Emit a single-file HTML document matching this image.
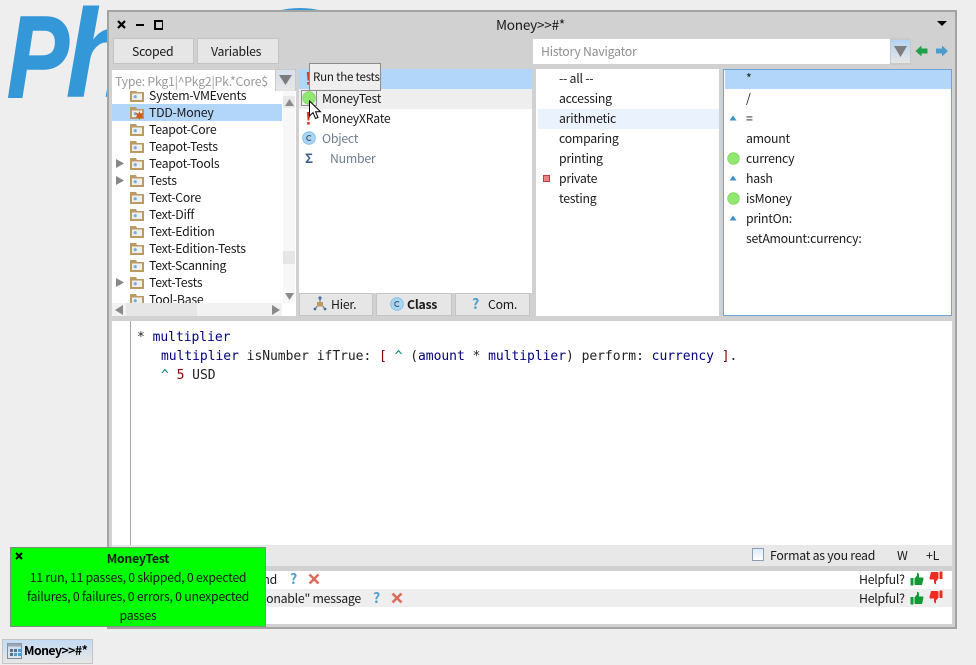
<!DOCTYPE html>
<html><head><meta charset="utf-8"><style>
html,body{margin:0;padding:0}
body{width:976px;height:665px;overflow:hidden;background:#eee;position:relative;font-family:"Noto Sans CJK JP","Liberation Sans",sans-serif;font-size:12.3px;letter-spacing:-.25px;color:#1a1a1a}
div,span.a,svg.a{position:absolute}
.t{white-space:nowrap;height:20px;line-height:18px}
.btn{background:#e6e6e6;border:1px solid #c4c4c4;box-sizing:border-box}
.mono{font-family:"DejaVu Sans Mono","Liberation Mono",monospace;font-size:13px;letter-spacing:-.04px;white-space:pre;line-height:19px;height:19px;color:#222}
.n{color:#000080}.r{color:#8b0000}.c{color:#008080}
.q{color:#4b9bcb;font-weight:bold;font-size:14px;letter-spacing:0}
</style></head><body>
<svg width="0" height="0" style="position:absolute"><defs>
<symbol id="f" viewBox="0 0 14 12"><path d="M0 0H6L7 2H14V12H0Z" fill="#bd9a62"/><rect x="2" y="3.5" width="10" height="6.5" fill="#eef0ee"/><circle cx="5.2" cy="6.7" r="1.6" fill="#6fb0dc"/></symbol>
<symbol id="g" viewBox="0 0 14 14"><circle cx="7" cy="7" r="6.2" fill="#90e870" stroke="#84d668" stroke-width="1"/></symbol>
<symbol id="tr" viewBox="0 0 8 6"><path d="M4 0.5L7.5 5.5H0.5Z" fill="#3f92c4"/></symbol>
<symbol id="up" viewBox="0 0 14 14"><path d="M0.5 6H3.5V13.5H0.5ZM4.5 6.5L7 3.5V0.7Q9 0.7 9 3V5.5H13.2Q13.8 7 13 9L12 13H6Q4.5 13 4.5 12Z" fill="#119a35"/></symbol>
<symbol id="dn" viewBox="0 0 14 14"><path d="M10.5 8H13.5V0.5H10.5ZM9.5 7.5L7 10.5V13.3Q5 13.3 5 11V8.5H0.8Q0.2 7 1 5L2 1H8Q9.5 1 9.5 2Z" fill="#ea2f20"/></symbol>
<symbol id="x" viewBox="0 0 12 12"><path d="M1.5 1.5L10.5 10.5M10.5 1.5L1.5 10.5" stroke="#dd6b5c" stroke-width="2.6" fill="none"/></symbol>
</defs></svg>

<div class="t" style="left:7px;top:-8px;font:italic bold 116px/130px 'Liberation Sans',sans-serif;letter-spacing:0;height:130px;color:#3498d8;-webkit-text-stroke:1.5px #3498d8;transform:scaleX(.8);transform-origin:left top">P</div>
<div class="t" style="left:66px;top:-11px;font:italic bold 124px/130px 'Liberation Sans',sans-serif;letter-spacing:0;height:130px;color:#3498d8;-webkit-text-stroke:1px #3498d8;transform:scaleX(.9);transform-origin:left top">h</div>
<svg class="a" style="left:240px;top:0" width="120" height="12"><ellipse cx="60" cy="50" rx="60" ry="42" fill="#3498d8"/></svg>

<!-- window -->
<div style="left:107px;top:10px;width:850px;height:619px;box-sizing:border-box;border:2px solid #a3a3a3;background:#d1d1d1"></div>
<svg class="a" style="left:117px;top:20px" width="46" height="10"><path d="M1 1L8 8M8 1L1 8" stroke="#000" stroke-width="2.2"/><rect x="19" y="4" width="8" height="2" fill="#000"/><rect x="38" y="1" width="8" height="8" fill="none" stroke="#000" stroke-width="2"/></svg>
<div class="t" style="left:496px;top:15px;font-size:13.6px">Money&gt;&gt;#*</div>
<svg class="a" style="left:937px;top:21px" width="10" height="6"><path d="M0 0H10L5 5Z" fill="#000"/></svg>

<div class="btn" style="left:113px;top:38px;width:81px;height:26px"></div>
<div class="t" style="left:132px;top:42px">Scoped</div>
<div class="btn" style="left:197px;top:38px;width:82px;height:26px"></div>
<div class="t" style="left:211px;top:42px">Variables</div>

<div style="left:533px;top:39px;width:357px;height:25px;background:#fff"></div>
<div class="t" style="left:541px;top:42px;color:#8f8f8f">History Navigator</div>
<div style="left:890px;top:38px;width:21px;height:27px;background:#c9c9c9"></div>
<div style="left:891px;top:40px;width:19px;height:23px;background:linear-gradient(#b4d4f4,#e6e6e6)"></div>
<svg class="a" style="left:894px;top:46px" width="14" height="12"><path d="M0 0H13L6.5 11Z" fill="#7d7d7d"/></svg>
<svg class="a" style="left:915px;top:44px" width="14" height="14"><path d="M0.5 7L6.5 1.5V4.5H12.5V9.5H6.5V12.5Z" fill="#1fa348"/></svg>
<svg class="a" style="left:935px;top:44px" width="14" height="14"><path d="M13 7L7 1.5V4.5H1V9.5H7V12.5Z" fill="#4b9bcb"/></svg>

<!-- package pane -->
<div style="left:112px;top:70px;width:163px;height:21px;background:#fff"></div>
<div class="t" style="left:115px;top:72px;color:#9a9a9a">Type: Pkg1|^Pkg2|Pk.*Core$</div>
<div style="left:275px;top:69px;width:21px;height:22px;background:#c9c9c9"></div>
<div style="left:276px;top:70px;width:19px;height:21px;background:linear-gradient(#d6e2ee,#e6e6e6)"></div>
<svg class="a" style="left:279px;top:75px" width="13" height="11"><path d="M0 0H13L6.5 10Z" fill="#7d7d7d"/></svg>
<div style="left:112px;top:91px;width:184px;height:225px;background:#fff;overflow:hidden">
 <div style="left:0;top:13px;width:170px;height:17px;background:#b2d5fa"></div>
 <div class="t" style="left:37px;top:-5px">System-VMEvents</div>
 <div class="t" style="left:37px;top:12px">TDD-Money</div>
 <div class="t" style="left:37px;top:29px">Teapot-Core</div>
 <div class="t" style="left:37px;top:46px">Teapot-Tests</div>
 <div class="t" style="left:37px;top:63px">Teapot-Tools</div>
 <div class="t" style="left:37px;top:80px">Tests</div>
 <div class="t" style="left:37px;top:97px">Text-Core</div>
 <div class="t" style="left:37px;top:114px">Text-Diff</div>
 <div class="t" style="left:37px;top:131px">Text-Edition</div>
 <div class="t" style="left:37px;top:148px">Text-Edition-Tests</div>
 <div class="t" style="left:37px;top:165px">Text-Scanning</div>
 <div class="t" style="left:37px;top:182px">Text-Tests</div>
 <div class="t" style="left:37px;top:199px">Tool-Base</div>
 <svg class="a" style="left:18px;top:0" width="14" height="225">
  <use href="#f" x="0" y="-1" width="14" height="12"/>
  <use href="#f" x="0" y="16" width="14" height="12"/>
  <use href="#f" x="0" y="33" width="14" height="12"/>
  <use href="#f" x="0" y="50" width="14" height="12"/>
  <use href="#f" x="0" y="67" width="14" height="12"/>
  <use href="#f" x="0" y="84" width="14" height="12"/>
  <use href="#f" x="0" y="101" width="14" height="12"/>
  <use href="#f" x="0" y="118" width="14" height="12"/>
  <use href="#f" x="0" y="135" width="14" height="12"/>
  <use href="#f" x="0" y="152" width="14" height="12"/>
  <use href="#f" x="0" y="169" width="14" height="12"/>
  <use href="#f" x="0" y="186" width="14" height="12"/>
  <use href="#f" x="0" y="203" width="14" height="12"/>
 </svg>
 <svg class="a" style="left:23px;top:20px" width="9" height="9"><path d="M4.5 0L5.5 2.5L8.5 2L7 4.5L8.5 7L5.5 6.5L4.5 9L3.5 6.5L0.5 7L2 4.5L0.5 2L3.5 2.5Z" fill="#d9541e"/></svg>
 <svg class="a" style="left:4px;top:68px" width="8" height="10"><path d="M0 0L8 4.5L0 9Z" fill="#888"/></svg>
 <svg class="a" style="left:4px;top:85px" width="8" height="10"><path d="M0 0L8 4.5L0 9Z" fill="#888"/></svg>
 <svg class="a" style="left:4px;top:187px" width="8" height="10"><path d="M0 0L8 4.5L0 9Z" fill="#888"/></svg>
 <!-- v scroll -->
 <div style="left:171px;top:0;width:12px;height:212px;background:#f7f7f7"></div>
 <div style="left:171px;top:5px;width:12px;height:12px;background:#e8e8e8"></div>
 <div style="left:171px;top:160px;width:12px;height:13px;background:#e6e6e6"></div>
 <svg class="a" style="left:173px;top:8px" width="9" height="7"><path d="M4.5 0L9 7H0Z" fill="#8a8a8a"/></svg>
 <svg class="a" style="left:173px;top:202px" width="9" height="7"><path d="M4.5 7L9 0H0Z" fill="#8a8a8a"/></svg>
 <!-- h scroll -->
 <div style="left:0;top:212px;width:170px;height:13px;background:#f2f2f2"></div>
 <div style="left:14px;top:212px;width:71px;height:13px;background:#e6e6e6"></div>
 <svg class="a" style="left:3px;top:214px" width="8" height="10"><path d="M0 5L8 0V10Z" fill="#8a8a8a"/></svg>
 <svg class="a" style="left:160px;top:214px" width="8" height="10"><path d="M8 5L0 0V10Z" fill="#8a8a8a"/></svg>
</div>

<!-- class pane -->
<div style="left:299px;top:69px;width:233px;height:224px;background:#fff"></div>
<div style="left:299px;top:69px;width:233px;height:20px;background:#b2d5fa"></div>
<div style="left:299px;top:89px;width:233px;height:20px;background:#eee"></div>
<div class="t" style="left:322px;top:89px">MoneyTest</div>
<div class="t" style="left:322px;top:109px">MoneyXRate</div>
<div class="t" style="left:322px;top:129px;color:#6f7f92">Object</div>
<div class="t" style="left:330px;top:149px;color:#6f7f92">Number</div>
<div style="left:301px;top:90px;width:16px;height:16px;box-sizing:border-box;border:1px solid #8a8a8a"></div>
<svg class="a" style="left:302px;top:91px" width="14" height="14"><use href="#g" width="14" height="14"/></svg>
<svg class="a" style="left:306px;top:72px" width="5" height="14"><path d="M0.8 0H4.2L3.4 8.5H1.6Z" fill="#d83a2e"/><rect x="1.2" y="10" width="2.6" height="2.6" fill="#d83a2e"/></svg>
<svg class="a" style="left:306px;top:112px" width="5" height="14"><path d="M0.8 0H4.2L3.4 8.5H1.6Z" fill="#d83a2e"/><rect x="1.2" y="10" width="2.6" height="2.6" fill="#d83a2e"/></svg>
<svg class="a" style="left:302px;top:131px" width="14" height="14"><circle cx="7" cy="7" r="6.3" fill="#a9d6f5" stroke="#85bfe6"/><path d="M9 5.3A2.5 2.5 0 1 0 9 8.7" fill="none" stroke="#3a4f66" stroke-width="1"/></svg>
<div class="t" style="left:305px;top:149px;color:#3e5f8a;font-weight:bold;font-size:13px">Σ</div>

<div class="btn" style="left:299px;top:293px;width:74px;height:23px"></div>
<div class="t" style="left:331px;top:295px">Hier.</div>
<svg class="a" style="left:313px;top:296px" width="14" height="15"><path d="M7 2V6M5 9L2 13M9 9L12 13" stroke="#4a6d92" stroke-width="1"/><circle cx="7" cy="2" r="1.6" fill="#4a6d92"/><rect x="4" y="6" width="6" height="4.5" fill="#c09a5c"/><circle cx="2" cy="13" r="1.4" fill="#4a6d92"/><circle cx="12" cy="13" r="1.4" fill="#4a6d92"/></svg>
<div class="btn" style="left:376px;top:293px;width:76px;height:23px"></div>
<div class="t" style="left:407px;top:295px;font-weight:bold">Class</div>
<svg class="a" style="left:390px;top:297px" width="14" height="14"><circle cx="7" cy="7" r="6.3" fill="#a9d6f5" stroke="#85bfe6"/><path d="M9 5.3A2.5 2.5 0 1 0 9 8.7" fill="none" stroke="#3a4f66" stroke-width="1"/></svg>
<div class="btn" style="left:455px;top:293px;width:75px;height:23px"></div>
<div class="t" style="left:488px;top:295px">Com.</div>
<div class="t q" style="left:472px;top:295px">?</div>

<!-- tooltip -->
<div style="left:309px;top:63px;width:72px;height:28px;box-sizing:border-box;border:1px solid #8a8a8a;background:#eee"></div>
<div class="t" style="left:313px;top:68px;font-size:11.6px">Run the tests</div>

<!-- protocol pane -->
<div style="left:536px;top:69px;width:183px;height:247px;background:#fff"></div>
<div style="left:538px;top:109px;width:181px;height:20px;background:#eaf3fd"></div>
<div class="t" style="left:559px;top:69px">-- all --</div>
<div class="t" style="left:559px;top:89px">accessing</div>
<div class="t" style="left:559px;top:109px">arithmetic</div>
<div class="t" style="left:559px;top:129px">comparing</div>
<div class="t" style="left:559px;top:149px">printing</div>
<div class="t" style="left:559px;top:169px">private</div>
<div class="t" style="left:559px;top:189px">testing</div>
<div style="left:543px;top:175px;width:7px;height:7px;box-sizing:border-box;border:1px solid #c43a42;background:#ee8088"></div>

<!-- method pane -->
<div style="left:723px;top:69px;width:229px;height:247px;box-sizing:border-box;border:1px solid #6fa3d6;background:#fff"></div>
<div style="left:725px;top:70px;width:226px;height:19px;background:#b2d5fa"></div>
<div class="t" style="left:746px;top:69px">*</div>
<div class="t" style="left:746px;top:89px">/</div>
<div class="t" style="left:746px;top:109px">=</div>
<div class="t" style="left:746px;top:129px">amount</div>
<div class="t" style="left:746px;top:149px">currency</div>
<div class="t" style="left:746px;top:169px">hash</div>
<div class="t" style="left:746px;top:189px">isMoney</div>
<div class="t" style="left:746px;top:209px">printOn:</div>
<div class="t" style="left:746px;top:229px">setAmount:currency:</div>
<svg class="a" style="left:729px;top:115px" width="8" height="6"><use href="#tr" width="8" height="6"/></svg>
<svg class="a" style="left:729px;top:175px" width="8" height="6"><use href="#tr" width="8" height="6"/></svg>
<svg class="a" style="left:729px;top:215px" width="8" height="6"><use href="#tr" width="8" height="6"/></svg>
<svg class="a" style="left:727px;top:152px" width="13" height="13"><use href="#g" width="13" height="13"/></svg>
<svg class="a" style="left:727px;top:192px" width="13" height="13"><use href="#g" width="13" height="13"/></svg>

<!-- code -->
<div style="left:112px;top:321px;width:840px;height:224px;background:#fff"></div>
<div style="left:130px;top:321px;width:1px;height:224px;background:#a8a8a8"></div>
<div class="mono" style="left:137px;top:328px">* <span class="n">multiplier</span></div>
<div class="mono" style="left:161px;top:347px"><span class="n">multiplier</span> isNumber ifTrue: <span class="r">[</span> <span class="c">^</span> (<span class="n">amount</span> * <span class="n">multiplier</span>) perform: <span class="n">currency</span> <span class="r">]</span>.</div>
<div class="mono" style="left:161px;top:366px"><span class="c">^</span> <span class="r">5</span> USD</div>

<!-- status -->
<div style="left:112px;top:545px;width:840px;height:21px;background:#e8e8e8"></div>
<div style="left:752px;top:548px;width:12px;height:13px;box-sizing:border-box;border:1px solid #8e9cb4;background:linear-gradient(#dcebfa,#fff)"></div>
<div class="t" style="left:770px;top:546px">Format as you read</div>
<div class="t" style="left:897px;top:546px">W</div>
<div class="t" style="left:926px;top:546px">+L</div>

<!-- critics -->
<div style="left:112px;top:571px;width:840px;height:53px;background:#fff"></div>
<div style="left:112px;top:589px;width:840px;height:18px;background:#eee"></div>
<div class="t" style="right:699px;top:570px">Unbound</div>
<div class="t" style="right:615px;top:589px">Sends "questionable" message</div>
<div class="t q" style="left:290px;top:570px">?</div>
<div class="t q" style="left:373px;top:589px">?</div>
<svg class="a" style="left:308px;top:573px" width="12" height="12"><use href="#x" width="12" height="12"/></svg>
<svg class="a" style="left:391px;top:592px" width="12" height="12"><use href="#x" width="12" height="12"/></svg>
<div class="t" style="left:859px;top:570px">Helpful?</div>
<div class="t" style="left:859px;top:589px">Helpful?</div>
<svg class="a" style="left:910px;top:572px" width="14" height="14"><use href="#up" width="14" height="14"/></svg>
<svg class="a" style="left:929px;top:571px" width="14" height="14"><use href="#dn" width="14" height="14"/></svg>
<svg class="a" style="left:910px;top:591px" width="14" height="14"><use href="#up" width="14" height="14"/></svg>
<svg class="a" style="left:929px;top:590px" width="14" height="14"><use href="#dn" width="14" height="14"/></svg>

<!-- toast -->
<div style="left:10px;top:547px;width:256px;height:80px;box-sizing:border-box;border:1px solid #7f8f7f;background:#00ff00"></div>
<svg class="a" style="left:15px;top:552px" width="8" height="8"><path d="M1 1L7 7M7 1L1 7" stroke="#000" stroke-width="2"/></svg>
<div class="t" style="left:10px;top:549px;width:256px;text-align:center;font-weight:bold">MoneyTest</div>
<div class="t" style="left:10px;top:568px;width:256px;text-align:center">11 run, 11 passes, 0 skipped, 0 expected</div>
<div class="t" style="left:10px;top:587px;width:256px;text-align:center">failures, 0 failures, 0 errors, 0 unexpected</div>
<div class="t" style="left:10px;top:606px;width:256px;text-align:center">passes</div>

<!-- cursor -->
<svg class="a" style="left:308px;top:100px" width="14" height="21"><path d="M1.5 1V16L5 12.6L7.5 18.5L10 17.5L7.6 11.8H12.5Z" fill="#fff" stroke="#000" stroke-width="1"/></svg>

<!-- taskbar -->
<div style="left:2px;top:639px;width:91px;height:25px;box-sizing:border-box;border:1px solid #c4c4c4;background:linear-gradient(#c4dcf4,#e6e6e6)"></div>
<svg class="a" style="left:7px;top:643px" width="15" height="16"><rect x="0.5" y="0.5" width="14" height="15" fill="none" stroke="#7d8b9a"/><rect x="0.5" y="0.5" width="14" height="3" fill="#9aa6b2"/><rect x="3" y="6" width="3" height="3" fill="#54718c"/><rect x="7" y="6" width="3" height="3" fill="#54718c"/><rect x="11" y="6" width="3" height="3" fill="#4f9ad0"/><rect x="3" y="10" width="3" height="3" fill="#54718c"/><rect x="7" y="10" width="3" height="3" fill="#4f9ad0"/><rect x="11" y="10" width="3" height="3" fill="#4f9ad0"/></svg>
<div class="t" style="left:24px;top:641px;font-weight:bold;letter-spacing:-.55px;color:#000">Money&gt;&gt;#*</div>
</body></html>
